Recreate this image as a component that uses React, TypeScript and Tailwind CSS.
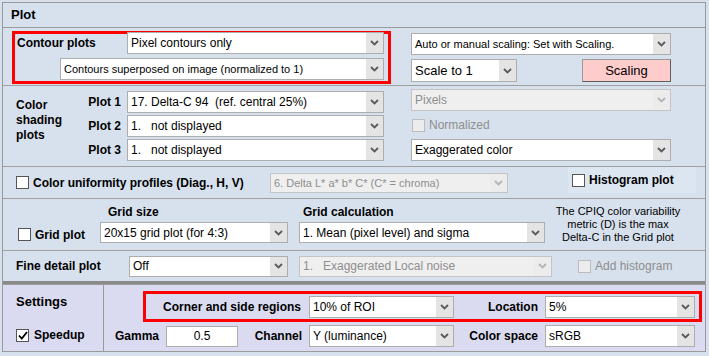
import React from 'react';

const font = { fontFamily: '"Liberation Sans", Arial, sans-serif' };

function Chevron({ disabled }: { disabled?: boolean }) {
  return (
    <svg width="9" height="6" viewBox="0 0 9 6">
      <path d="M1 1 L4.5 4.5 L8 1" fill="none" stroke={disabled ? '#b4b4b4' : '#5a5a5a'} strokeWidth="1.8" />
    </svg>
  );
}

interface SelectProps {
  text: string;
  className: string;
  textClass?: string;
  disabled?: boolean;
}

function Select({ text, className, textClass = 'text-[12px]', disabled }: SelectProps) {
  return (
    <div
      className={`flex shrink-0 border ${
        disabled ? 'border-[#c4c4c4] bg-[#efefef] text-[#8e8e8e]' : 'border-[#adadad] bg-white text-black'
      } ${className}`}
    >
      <div className={`flex-1 flex items-center pl-[3px] whitespace-pre overflow-hidden ${textClass}`}>{text}</div>
      <div
        className={`w-[17px] flex items-center justify-center ${disabled ? 'bg-[#ececec]' : 'bg-[#e4e4e4]'}`}
      >
        <Chevron disabled={disabled} />
      </div>
    </div>
  );
}

function Check({ checked, disabled }: { checked?: boolean; disabled?: boolean }) {
  return (
    <div
      className={`w-[13px] h-[13px] shrink-0 border flex items-center justify-center ${
        disabled ? 'border-[#bdbdbd] bg-[#ececec]' : 'border-[#555555] bg-white'
      }`}
    >
      {checked && (
        <svg width="10" height="9" viewBox="0 0 10 9">
          <path d="M1 4.5 L3.8 7.5 L9 1" fill="none" stroke="#000" strokeWidth="1.8" />
        </svg>
      )}
    </div>
  );
}

export default function App() {
  return (
    <div className="w-[709px] h-[356px] bg-[#d7e1ed] pt-[2px] pl-[2px] overflow-hidden" style={font}>
      {/* Plot panel */}
      <div className="w-[704px] border border-[#9a9a9a] border-b-0">
        <div className="h-[25px] border-b border-[#9a9a9a] flex items-center pl-[8px] text-[13px] font-bold text-black">
          Plot
        </div>

        {/* Contour plots */}
        <div className="h-[58px] border-b border-[#a0a0a0] flex">
          <div className="ml-[9px] mt-[3px] w-[379px] h-[53px] border-[3px] border-[#ff0000] flex flex-col">
            <div className="flex items-center -mt-[2px]">
              <div className="w-[112px] pl-[2px] text-[12px] font-bold">Contour plots</div>
              <Select text="Pixel contours only" className="w-[257px] h-[22px]" />
            </div>
            <Select
              text="Contours superposed on image (normalized to 1)"
              className="ml-[45px] mt-[4px] w-[324px] h-[22px]"
              textClass="text-[11px]"
            />
          </div>
          <div className="ml-[20px] mt-[5px] flex flex-col">
            <Select
              text="Auto or manual scaling: Set with Scaling."
              className="w-[260px] h-[22px]"
              textClass="text-[11px]"
            />
            <div className="flex mt-[4px]">
              <Select text="Scale to 1" className="w-[106px] h-[23px]" textClass="text-[13px]" />
              <button className="ml-[65px] w-[89px] h-[23px] bg-[#ffcccc] border border-[#9a9a9a] border-b-[#5e5e5e] border-r-[#5e5e5e] text-[13px] text-black">
                Scaling
              </button>
            </div>
          </div>
        </div>

        {/* Color shading plots */}
        <div className="h-[81px] border-b border-[#a0a0a0] flex">
          <div className="w-[80px] pl-[13px] pt-[12px] text-[12px] font-bold leading-[15px]">
            Color
            <br />
            shading
            <br />
            plots
          </div>
          <div className="pt-[5px] flex flex-col gap-[2px]">
            {[
              ['Plot 1', '17. Delta-C 94  (ref. central 25%)'],
              ['Plot 2', '1.   not displayed'],
              ['Plot 3', '1.   not displayed'],
            ].map(([label, value]) => (
              <div key={label} className="flex items-center">
                <div className="w-[38px] text-right text-[12px] font-bold">{label}</div>
                <Select text={value} className="ml-[6px] w-[257px] h-[22px]" />
              </div>
            ))}
          </div>
          <div className="ml-[27px] pt-[3px] flex flex-col">
            <Select text="Pixels" className="w-[260px] h-[22px]" disabled />
            <div className="h-[28px] flex items-center pl-[1px]">
              <Check disabled />
              <span className="ml-[4px] text-[12px] text-[#8e8e8e]">Normalized</span>
            </div>
            <Select text="Exaggerated color" className="w-[260px] h-[22px]" />
          </div>
        </div>

        {/* Color uniformity profiles */}
        <div className="h-[32px] border-b border-[#a0a0a0] flex">
          <div className="flex items-center pl-[13px] w-[267px]">
            <Check />
            <span className="ml-[4px] text-[12px] font-bold whitespace-nowrap">Color uniformity profiles (Diag., H, V)</span>
          </div>
          <Select
            text="6. Delta L* a* b* C* (C* = chroma)"
            className="mt-[6px] w-[238px] h-[20px]"
            textClass="text-[11px]"
            disabled
          />
          <div className="ml-[60px] w-[128px] h-[26px] bg-[#dce6f1] flex items-center pl-[4px]">
            <Check />
            <span className="ml-[4px] text-[12px] font-bold">Histogram plot</span>
          </div>
        </div>

        {/* Grid plot */}
        <div className="h-[52px] border-b border-[#a0a0a0] flex">
          <div className="w-[97px] pl-[15px] pt-[27px]">
            <div className="h-[17px] flex items-center">
              <Check />
              <span className="ml-[4px] text-[12px] font-bold">Grid plot</span>
            </div>
          </div>
          <div className="flex flex-col w-[188px]">
            <div className="pt-[6px] leading-[14px] pl-[8px] text-[12px] font-bold">Grid size</div>
            <Select text="20x15 grid plot (for 4:3)" className="mt-[3px] w-[188px] h-[21px]" />
          </div>
          <div className="flex flex-col ml-[11px] w-[246px]">
            <div className="pt-[6px] leading-[14px] pl-[4px] text-[12px] font-bold">Grid calculation</div>
            <Select text="1. Mean (pixel level) and sigma" className="mt-[3px] w-[246px] h-[21px]" />
          </div>
          <div className="w-[146px] pt-[6px] text-center text-[11px] leading-[13px]">
            The CPIQ color variability
            <br />
            metric (D) is the max
            <br />
            Delta-C in the Grid plot
          </div>
        </div>

        {/* Fine detail plot */}
        <div className="h-[33px] border-b-[3px] border-[#8a8a8a] flex items-center pl-[13px]">
          <div className="w-[113px] text-[12px] font-bold">Fine detail plot</div>
          <Select text="Off" className="w-[159px] h-[21px]" />
          <Select
            text="1.   Exaggerated Local noise"
            className="ml-[11px] w-[253px] h-[21px]"
            disabled
          />
          <div className="ml-[26px] flex items-center">
            <Check disabled />
            <span className="ml-[4px] text-[12px] text-[#8e8e8e]">Add histogram</span>
          </div>
        </div>
      </div>

      {/* Settings panel */}
      <div className="w-[704px] h-[68px] border border-[#9a9a9a] bg-[#dadbf1] flex">
        <div className="w-[101px] border-r border-[#9a9a9a] flex flex-col pl-[13px]">
          <div className="pt-[9px] text-[13px] font-bold leading-[16px]">Settings</div>
          <div className="mt-[16px] flex items-center">
            <Check checked />
            <span className="ml-[5px] text-[12px] font-bold">Speedup</span>
          </div>
        </div>
        <div className="flex flex-col">
          <div className="ml-[39px] mt-[6px] w-[559px] h-[31px] border-[3px] border-[#ff0000] flex items-center">
            <div className="w-[163px] pr-[8px] text-right text-[12px] font-bold">Corner and side regions</div>
            <Select text="10% of ROI" className="w-[145px] h-[22px]" />
            <div className="w-[91px] pr-[7px] text-right text-[12px] font-bold">Location</div>
            <Select text="5%" className="w-[150px] h-[22px]" />
          </div>
          <div className="mt-[3px] flex items-center">
            <div className="w-[62px] pl-[11px] text-[12px] font-bold">Gamma</div>
            <div className="w-[72px] h-[21px] border border-[#adadad] bg-white flex items-center justify-center text-[12px]">
              0.5
            </div>
            <div className="w-[71px] pr-[7px] text-right text-[12px] font-bold">Channel</div>
            <Select text="Y (luminance)" className="w-[145px] h-[22px]" />
            <div className="w-[91px] pr-[7px] text-right text-[12px] font-bold">Color space</div>
            <Select text="sRGB" className="w-[150px] h-[22px]" />
          </div>
        </div>
      </div>
    </div>
  );
}
